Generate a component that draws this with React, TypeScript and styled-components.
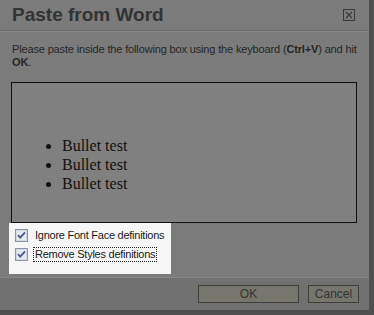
import React from "react";
import styled, { createGlobalStyle } from "styled-components";

const GlobalStyle = createGlobalStyle`
  html, body {
    margin: 0;
    padding: 0;
    background: #4e4e4e;
  }
`;

const Shell = styled.div`
  width: 374px;
  height: 315px;
  background: #505050;
  overflow: hidden;
`;

const Dialog = styled.div`
  width: 369px;
  height: 310px;
  background: #7b7b7b;
  display: flex;
  flex-direction: column;
  color: #2e2e2e;
`;

const TitleBar = styled.div`
  height: 30px;
  display: flex;
  align-items: center;
  justify-content: space-between;
  padding: 0 14px 0 12px;
  border-bottom: 1px solid #6e6e6e;
  box-shadow: 0 1px 0 #888;
`;

const Title = styled.h1`
  margin: 0;
  font-family: "Liberation Sans", Arial, sans-serif;
  font-weight: bold;
  font-size: 19px;
  color: #333;
`;

const CloseBox = styled.span`
  display: flex;
  width: 12px;
  height: 12px;
`;

const Body = styled.div`
  flex: 1;
  padding: 12px 10px 0 12px;
  display: flex;
  flex-direction: column;
`;

const Intro = styled.p`
  margin: 0;
  font-family: "Liberation Sans", Arial, sans-serif;
  font-size: 11px;
  line-height: 13px;
  letter-spacing: -0.15px;
  color: #262626;
`;

const PasteArea = styled.div`
  margin: 13px 0 0 -1px;
  width: 346px;
  height: 141px;
  border: 1px solid #111;
  background: #808080;
  box-sizing: border-box;
`;

const BulletList = styled.ul`
  margin: 0;
  padding: 53px 0 0 50px;
  font-family: "Liberation Serif", "Times New Roman", serif;
  font-size: 16px;
  line-height: 19px;
  color: #111;
`;

const Options = styled.div`
  margin: 0 0 0 -3px;
  width: 156px;
  padding: 6px 0 13px 6px;
  background: #f6f6f6;
  display: flex;
  flex-direction: column;
  gap: 6px;
`;

const OptionRow = styled.label`
  display: flex;
  align-items: center;
  gap: 6px;
  font-family: "Liberation Sans", Arial, sans-serif;
  font-size: 11px;
  letter-spacing: -0.25px;
  color: #1a1a1a;
`;

const Label = styled.span<{ $focused?: boolean }>`
  padding: 0 1px;
  outline: ${(p) => (p.$focused ? "1px dotted #222" : "none")};
  line-height: 13px;
`;

const Box = styled.span`
  width: 13px;
  height: 13px;
  display: flex;
`;

const Footer = styled.div`
  height: 32px;
  border-top: 1px solid #868686;
  background: #717171;
  display: flex;
  align-items: center;
  justify-content: flex-end;
  gap: 9px;
  padding: 0 10px 0 0;
`;

const Button = styled.button<{ $wide?: boolean }>`
  width: ${(p) => (p.$wide ? "101px" : "51px")};
  height: 18px;
  padding: 0;
  border: 1px solid #3e3e3a;
  background: #77766d;
  font-family: "Liberation Sans", Arial, sans-serif;
  font-size: 12px;
  color: #333;
`;

const Check = () => (
  <Box>
    <svg width="13" height="13" viewBox="0 0 13 13">
      <rect x="0.5" y="0.5" width="12" height="12" fill="#f0f2f6" stroke="#8a93a8" />
      <rect x="1.5" y="1.5" width="10" height="10" fill="#e6e9f0" stroke="#d4d8e2" />
      <path d="M3 6.2 L5.2 8.6 L10 3.4" fill="none" stroke="#4b5b8e" strokeWidth="1.8" />
    </svg>
  </Box>
);

export default function App() {
  return (
    <>
      <GlobalStyle />
      <Shell>
        <Dialog>
          <TitleBar>
            <Title>Paste from Word</Title>
            <CloseBox>
              <svg width="12" height="12" viewBox="0 0 12 12">
                <rect x="0.5" y="0.5" width="11" height="11" fill="none" stroke="#3a3a3a" />
                <path d="M3 3 L9 9 M9 3 L3 9" stroke="#3a3a3a" strokeWidth="1.2" />
              </svg>
            </CloseBox>
          </TitleBar>
          <Body>
            <Intro>
              Please paste inside the following box using the keyboard (<b>Ctrl+V</b>) and hit{" "}
              <b>OK</b>.
            </Intro>
            <PasteArea>
              <BulletList>
                <li>Bullet test</li>
                <li>Bullet test</li>
                <li>Bullet test</li>
              </BulletList>
            </PasteArea>
            <Options>
              <OptionRow>
                <Check />
                <Label>Ignore Font Face definitions</Label>
              </OptionRow>
              <OptionRow>
                <Check />
                <Label $focused>Remove Styles definitions</Label>
              </OptionRow>
            </Options>
          </Body>
          <Footer>
            <Button $wide>OK</Button>
            <Button>Cancel</Button>
          </Footer>
        </Dialog>
      </Shell>
    </>
  );
}
